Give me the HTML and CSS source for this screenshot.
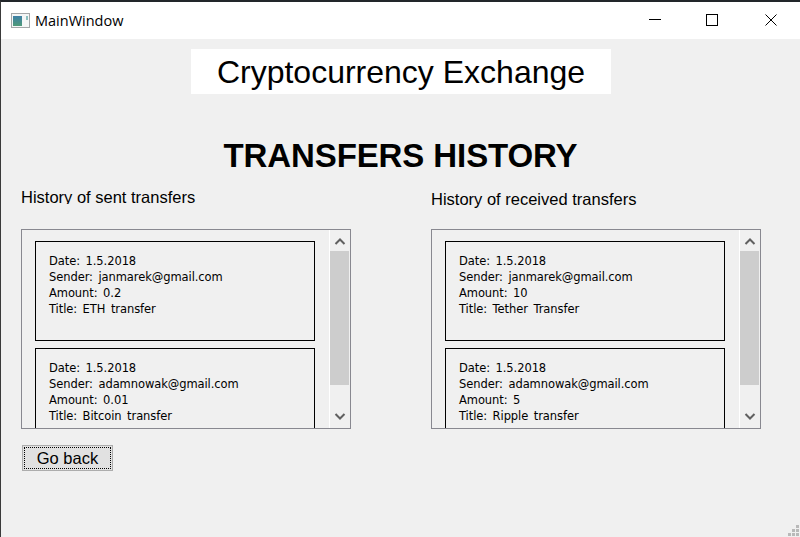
FILE: index.html
```html
<!DOCTYPE html>
<html lang="en">
<head>
    <meta charset="UTF-8">
    <meta name="viewport" content="width=device-width, initial-scale=1.0">
    <title>MainWindow</title>
    <link rel="stylesheet" href="styles.css">
</head>
<body>
    <div class="window">
        <header class="titlebar">
            <svg class="app-icon" width="20" height="16" viewBox="0 0 20 16">
                <defs>
                    <linearGradient id="iconFill" x1="0" y1="0" x2="0" y2="1">
                        <stop offset="0" stop-color="#3d7fa6"/>
                        <stop offset="1" stop-color="#4f9a78"/>
                    </linearGradient>
                </defs>
                <rect x="0.5" y="0.5" width="18" height="14" fill="#f4f6f6" stroke="#a3a6a8"/>
                <rect x="2" y="3" width="9" height="10" fill="url(#iconFill)"/>
                <rect x="15" y="3" width="2" height="4" fill="#8cc0c0"/>
            </svg>
            <span class="app-name">MainWindow</span>
            <div class="controls">
                <button class="control" aria-label="Minimize">
                    <svg width="12" height="12" viewBox="0 0 12 12"><path d="M0 5.5H12" stroke="#000" fill="none"/></svg>
                </button>
                <button class="control control-max" aria-label="Maximize">
                    <svg width="12" height="12" viewBox="0 0 12 12"><rect x="0.5" y="0.5" width="11" height="11" stroke="#000" fill="none"/></svg>
                </button>
                <button class="control" aria-label="Close">
                    <svg width="12" height="12" viewBox="0 0 12 12"><path d="M0.5 0.5L11.5 11.5M11.5 0.5L0.5 11.5" stroke="#000" fill="none"/></svg>
                </button>
            </div>
        </header>
        <main class="content">
            <div class="banner">Cryptocurrency Exchange</div>
            <h1 class="heading">TRANSFERS HISTORY</h1>
            <div class="columns">
                <section class="column">
                    <h2 class="column-label">History of sent transfers</h2>
                    <div class="panel">
                        <div class="list">
                            <div class="card">
                                <p>Date: 1.5.2018</p>
                                <p>Sender: janmarek@gmail.com</p>
                                <p>Amount: 0.2</p>
                                <p>Title: ETH transfer</p>
                            </div>
                            <div class="card">
                                <p>Date: 1.5.2018</p>
                                <p>Sender: adamnowak@gmail.com</p>
                                <p>Amount: 0.01</p>
                                <p>Title: Bitcoin transfer</p>
                            </div>
                        </div>
                        <div class="scrollbar">
                            <svg class="arrow" width="20" height="21" viewBox="0 0 20 21"><path d="M5.5 14L10 9.5L14.5 14" stroke="#606060" stroke-width="2" fill="none"/></svg>
                            <div class="thumb"></div>
                            <svg class="arrow arrow-down" width="20" height="23" viewBox="0 0 20 23"><path d="M5.5 9L10 13.5L14.5 9" stroke="#606060" stroke-width="2" fill="none"/></svg>
                        </div>
                    </div>
                    <button class="back-button"><span class="back-focus">Go back</span></button>
                </section>
                <section class="column column-right">
                    <h2 class="column-label">History of received transfers</h2>
                    <div class="panel">
                        <div class="list">
                            <div class="card">
                                <p>Date: 1.5.2018</p>
                                <p>Sender: janmarek@gmail.com</p>
                                <p>Amount: 10</p>
                                <p>Title: Tether Transfer</p>
                            </div>
                            <div class="card">
                                <p>Date: 1.5.2018</p>
                                <p>Sender: adamnowak@gmail.com</p>
                                <p>Amount: 5</p>
                                <p>Title: Ripple transfer</p>
                            </div>
                        </div>
                        <div class="scrollbar">
                            <svg class="arrow" width="20" height="21" viewBox="0 0 20 21"><path d="M5.5 14L10 9.5L14.5 14" stroke="#606060" stroke-width="2" fill="none"/></svg>
                            <div class="thumb"></div>
                            <svg class="arrow arrow-down" width="20" height="23" viewBox="0 0 20 23"><path d="M5.5 9L10 13.5L14.5 9" stroke="#606060" stroke-width="2" fill="none"/></svg>
                        </div>
                    </div>
                </section>
            </div>
        </main>
        <svg class="grip" width="12" height="12" viewBox="0 0 12 12" fill="#b9b9b9">
            <rect x="8" y="0" width="3" height="3"/>
            <rect x="4" y="4" width="3" height="3"/>
            <rect x="8" y="4" width="3" height="3"/>
            <rect x="0" y="8" width="3" height="3"/>
            <rect x="4" y="8" width="3" height="3"/>
            <rect x="8" y="8" width="3" height="3"/>
        </svg>
    </div>
</body>
</html>
```

FILE: styles.css
```css
html, body {
    margin: 0;
    height: 100%;
    overflow: hidden;
}
body {
    font-family: "Liberation Sans", Arial, sans-serif;
    color: #000;
    background-color: #f0f0f0;
}
.window {
    position: relative;
    height: 537px;
    box-sizing: border-box;
    display: flex;
    flex-direction: column;
    border-top: 2px solid #22262a;
    border-left: 1px solid #3a3a3a;
}
.titlebar {
    height: 37px;
    flex-shrink: 0;
    display: flex;
    align-items: center;
    background-color: #fff;
    padding-left: 10px;
}
.app-icon {
    margin-right: 4px;
}
.app-name {
    font-family: "Open Sans", sans-serif;
    font-size: 14.5px;
}
.controls {
    margin-left: auto;
    display: flex;
    margin-top: -1px;
}
.control {
    width: 58px;
    height: 37px;
    padding: 0;
    border: 0;
    background: none;
    display: flex;
    align-items: center;
    justify-content: center;
}
.control-max {
    padding-right: 2px;
}
.content {
    flex-grow: 1;
    display: flex;
    flex-direction: column;
}
.banner {
    align-self: flex-start;
    width: 420px;
    height: 45px;
    margin: 10px 0 0 190px;
    background-color: #fff;
    font-size: 32px;
    line-height: 46px;
    text-align: center;
}
.heading {
    margin: 41px 0 0;
    height: 42px;
    font-size: 33px;
    line-height: 42px;
    font-weight: bold;
    text-align: center;
    letter-spacing: -0.1px;
}
.columns {
    display: flex;
    padding: 0 0 0 20px;
}
.column {
    width: 330px;
    display: flex;
    flex-direction: column;
}
.column-right {
    margin-left: 80px;
}
.column-label {
    margin: 11px 0 0;
    height: 16px;
    overflow: hidden;
    font-size: 16.5px;
    line-height: 19px;
    font-weight: normal;
    white-space: nowrap;
}
.column-right .column-label {
    margin-top: 13px;
    height: 18px;
}
.panel {
    margin-top: 25px;
    height: 200px;
    box-sizing: border-box;
    display: flex;
    border: 1px solid #888890;
}
.column-right .panel {
    margin-top: 21px;
}
.list {
    flex-grow: 1;
    min-width: 0;
    overflow: hidden;
    padding: 11px 0 0 13px;
    border-right: 1px solid #fff;
}
.card {
    width: 280px;
    height: 100px;
    box-sizing: border-box;
    margin-bottom: 7px;
    padding: 11px 13px;
    border: 1px solid #000;
    font-family: "DejaVu Sans", sans-serif;
    font-size: 11.5px;
    line-height: 16px;
    word-spacing: 2px;
    letter-spacing: -0.08px;
}
.card p {
    margin: 0;
}
.scrollbar {
    width: 20px;
    flex-shrink: 0;
    display: flex;
    flex-direction: column;
}
.arrow {
    flex-shrink: 0;
}
.arrow-down {
    margin-top: auto;
}
.thumb {
    height: 134px;
    width: 19px;
    background-color: #cdcdcd;
}
.back-button {
    align-self: flex-start;
    margin: 16px 0 0 1px;
    width: 91px;
    height: 26px;
    padding: 1px;
    border: 1px solid #adadad;
    background-color: #e1e1e1;
    font-family: inherit;
    font-size: 16.5px;
    color: #000;
}
.back-focus {
    display: block;
    height: 100%;
    box-sizing: border-box;
    border: 1px dotted #000;
    line-height: 21px;
}
.grip {
    position: absolute;
    right: 0;
    bottom: 0;
}
```
